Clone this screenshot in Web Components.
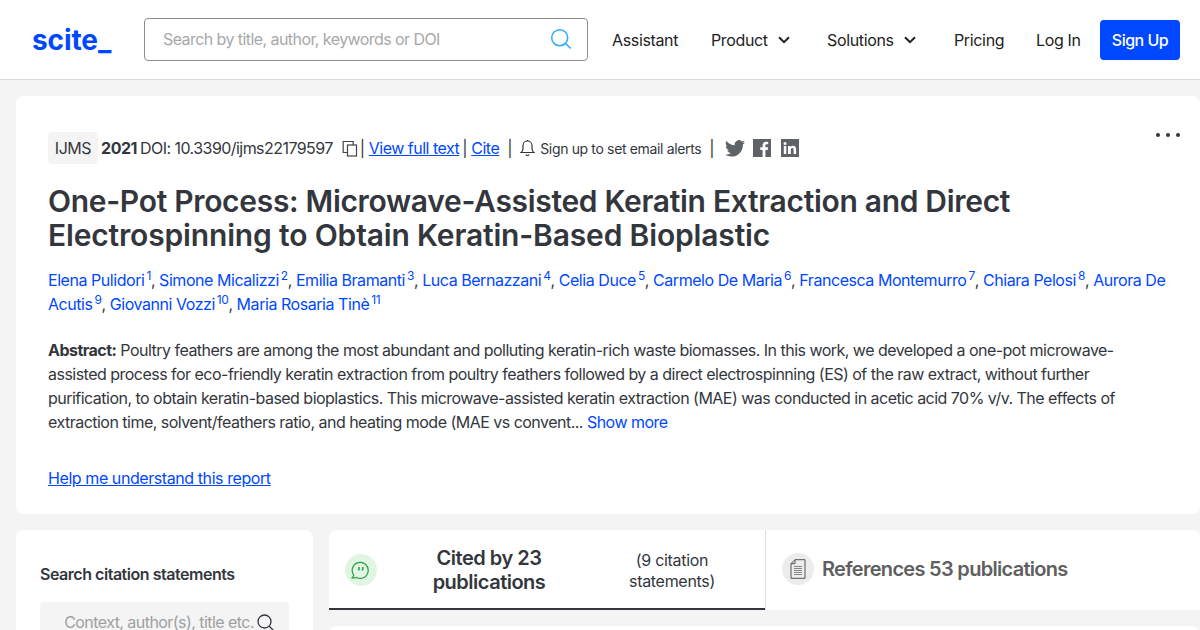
<!DOCTYPE html>
<html lang="en">
<head>
<meta charset="utf-8">
<title>scite</title>
<style>
html, body { margin: 0; height: 630px; overflow: hidden; background: #f4f4f4; }
body { font-family: Inter, "Liberation Sans", sans-serif; color: #33373d; }
.lower { display: flex; gap: 16px; box-sizing: border-box; height: 116px; overflow: hidden; padding: 16px 0 0 16px; }
.right { flex: 1; display: flex; flex-direction: column; gap: 16px; }
</style>
</head>
<body>
<site-header></site-header>
<report-card></report-card>
<div class="lower">
    <search-panel></search-panel>
    <div class="right">
        <cite-tabs></cite-tabs>
        <result-card></result-card>
    </div>
</div>
<script>
class SiteHeader extends HTMLElement {
    constructor() {
        super();
        this.attachShadow({ mode: 'open' });
        const chevron = `<svg width="12" height="8" viewBox="0 0 12 8" fill="none" stroke="#222" stroke-width="2"><path d="M1 1.2l5 5 5-5"/></svg>`;
        this.shadowRoot.innerHTML = `
        <style>
:host {
    display: flex;
    align-items: center;
    box-sizing: border-box;
    height: 80px;
    background: #fff;
    border-bottom: 1px solid #dcdcdc;
    padding: 0 20px 0 32px;
    font-size: 16px;
    letter-spacing: -0.35px;
    color: #222;
    white-space: nowrap;
}
.logo {
    flex: none;
    width: 112px;
    font-size: 28px;
    font-weight: 700;
    letter-spacing: -0.1px;
    color: #0048ff;
}
.search {
    display: flex;
    flex: none;
    align-items: center;
    justify-content: space-between;
    box-sizing: border-box;
    width: 444px;
    height: 43px;
    padding: 0 15px 2px 18px;
    border: 1px solid #8c8c8c;
    border-radius: 4px;
    color: #a8a8a8;
    letter-spacing: -0.57px;
}
nav {
    display: flex;
    align-items: center;
    margin-left: 24px;
}
.item { display: flex; align-items: center; gap: 10px; }
.signup {
    background: #0048ff;
    color: #fff;
    font-weight: 500;
    border-radius: 4px;
    box-sizing: border-box;
    width: 80px;
    text-align: center;
    height: 40px;
    line-height: 40px;
    letter-spacing: -0.5px;
}
        </style>
        <div class="logo">scite_</div>
        <div class="search">
            <span>Search by title, author, keywords or DOI</span>
            <svg width="22" height="22" viewBox="0 0 22 22" fill="none" stroke="#2aa9ff" stroke-width="1.5"><circle cx="9.7" cy="9.7" r="8"/><path d="M15.5 15.5l5.2 5"/></svg>
        </div>
        <nav>
            <span class="item" style="width:99px">Assistant</span>
            <span class="item" style="width:116px">Product ${chevron}</span>
            <span class="item" style="width:127px">Solutions ${chevron}</span>
            <span class="item" style="width:82px">Pricing</span>
            <span class="item" style="width:64px">Log In</span>
            <span class="signup">Sign Up</span>
        </nav>`;
    }
}

class ReportCard extends HTMLElement {
    constructor() {
        super();
        this.attachShadow({ mode: 'open' });
        const authors = [
            ['Elena Pulidori', 1], ['Simone Micalizzi', 2], ['Emilia Bramanti', 3], ['Luca Bernazzani', 4],
            ['Celia Duce', 5], ['Carmelo De Maria', 6], ['Francesca Montemurro', 7], ['Chiara Pelosi', 8],
            ['Aurora De Acutis', 9], ['Giovanni Vozzi', 10], ['Maria Rosaria Tinè', 11],
        ];
        this.shadowRoot.innerHTML = `
        <style>
:host {
    display: block;
    position: relative;
    box-sizing: border-box;
    height: 418px;
    margin: 16px 0 0 16px;
    padding: 36px 32px 0;
    background: #fff;
    border-radius: 8px;
    font-size: 16px;
    letter-spacing: -0.45px;
    color: #33373d;
}
a { color: #0048ff; }
.blue { color: #0048ff; text-decoration: none; }
.meta { display: flex; align-items: center; height: 32px; white-space: nowrap; }
.tag { flex: none; width: 50px; text-align: center; background: #f4f4f4; border-radius: 4px; height: 32px; line-height: 32px; margin-right: 3px; }
.meta svg { flex: none; }
.small { font-size: 14px; letter-spacing: -0.35px; }
h1 {
    margin: 20px 0 0;
    font-size: 30px;
    line-height: 34px;
    font-weight: 600;
    letter-spacing: -0.31px;
    color: #33373d;
}
h1 span { letter-spacing: -0.16px; }
.authors { margin-top: 16px; line-height: 24px; width: 1120px; }
sup { font-size: 12px; line-height: 0; margin-left: 2px; color: #0048ff; }
.abstract { margin-top: 22px; line-height: 24px; width: 1090px; letter-spacing: -0.52px; }
.help { display: block; margin-top: 32px; line-height: 24px; letter-spacing: -0.42px; }
.more { position: absolute; right: 20px; top: 37px; display: flex; gap: 6px; }
.more i { width: 4px; height: 4px; border-radius: 50%; background: #33373d; }
        </style>
        <div class="more"><i></i><i></i><i></i></div>
        <div class="meta">
            <span class="tag">IJMS</span>
            <b style="font-weight:700;margin-right:3px">2021</b>
            <span style="letter-spacing:-0.55px">DOI: 10.3390/ijms22179597</span>
            <svg style="margin:0 1px 0 9px" width="17" height="17" viewBox="0 0 17 17" fill="none" stroke="#444" stroke-width="1.2"><path d="M5 12.5H1.2V1.5h10V5"/><rect x="5.500" y="5" width="9" height="11"/></svg>
            <span>|&nbsp;</span>
            <a href="#" style="letter-spacing:-0.5px">View full text</a>
            <span style="margin:0 4px 0 3px">|</span>
            <a href="#">Cite</a>
            <span style="margin:0 8px">|</span>
            <svg width="15" height="18" viewBox="0 0 15 18" fill="none" stroke="#33373d" stroke-width="1.2"><path d="M1 13.500c1.500-1 2-2 2-4V6.500a4.500 4.500 0 0 1 9 0v3c0 2 .5 3 2 4z"/><path d="M6 15.500a1.600 1.600 0 0 0 3 0M7.500 1v1"/></svg>
            <span class="small" style="margin:0 8px 0 5px">Sign up to set email alerts</span>
            <span style="margin-right:11px">|</span>
            <svg width="20" height="17" viewBox="0 0 24 20" fill="#5f6368"><path d="M24 2.400a9.800 9.800 0 0 1-2.800.8A5 5 0 0 0 23.300.500a9.800 9.800 0 0 1-3.100 1.200 4.900 4.900 0 0 0-8.400 4.500A14 14 0 0 1 1.700 1a4.900 4.900 0 0 0 1.500 6.600 4.900 4.900 0 0 1-2.200-.6c0 2.400 1.700 4.500 4 5a4.900 4.900 0 0 1-2.200.1 4.900 4.900 0 0 0 4.600 3.400A9.900 9.900 0 0 1 0 17.500 14 14 0 0 0 7.500 19.700c9.100 0 14.300-7.700 14-14.600A10 10 0 0 0 24 2.400z"/></svg>
            <svg style="margin-left:8px" width="18" height="18" viewBox="0 0 18 18"><rect width="18" height="18" fill="#5f6368"/><path fill="#fff" d="M12.400 18v-7h2.300l.4-2.700h-2.700V6.600c0-.8.2-1.300 1.300-1.300h1.500V2.900c-.3 0-1.100-.1-2.100-.1-2.100 0-3.500 1.300-3.500 3.600v1.900H7.300V11h2.300v7z"/></svg>
            <svg style="margin-left:10px" width="18" height="18" viewBox="0 0 18 18"><rect width="18" height="18" fill="#5f6368"/><path fill="#fff" d="M2.800 7h2.500v8H2.800zM4 3a1.500 1.500 0 1 1 0 3 1.500 1.500 0 0 1 0-3zM7 7h2.400v1.100c.4-.7 1.300-1.300 2.600-1.300 2.600 0 3.100 1.700 3.100 3.900V15h-2.500v-3.800c0-1 0-2.200-1.300-2.200s-1.500 1-1.500 2.100V15H7z"/></svg>
        </div>
        <h1>One-Pot Process: Microwave-Assisted Keratin Extraction and Direct <span>Electrospinning to Obtain Keratin-Based Bioplastic</span></h1>
        <div class="authors">${authors.map(([name, n]) => `<a class="blue" href="#">${name}</a><sup>${n}</sup>`).join(', ')}</div>
        <div class="abstract"><b style="font-weight:700">Abstract:</b> Poultry feathers are among the most abundant and polluting keratin-rich waste biomasses. In this work, we developed a one-pot microwave-assisted process for eco-friendly keratin extraction from poultry feathers followed by a direct electrospinning (ES) of the raw extract, without further purification, to obtain keratin-based bioplastics. This microwave-assisted keratin extraction (MAE) was conducted in acetic acid 70% v/v. The effects of extraction time, solvent/feathers ratio, and heating mode (MAE vs convent... <a class="blue" href="#">Show more</a></div>
        <a class="help" href="#">Help me understand this report</a>`;
    }
}

class SearchPanel extends HTMLElement {
    constructor() {
        super();
        this.attachShadow({ mode: 'open' });
        this.shadowRoot.innerHTML = `
        <style>
:host {
    display: block;
    box-sizing: border-box;
    flex: none;
    width: 297px;
    height: 200px;
    padding: 34px 24px 0;
    background: #fff;
    border-radius: 8px;
}
.title { font-size: 16px; line-height: 20px; font-weight: 600; color: #33373d; letter-spacing: -0.47px; }
.input {
    display: flex;
    align-items: center;
    justify-content: flex-end;
    gap: 3px;
    box-sizing: border-box;
    height: 40px;
    margin-top: 18px;
    padding-right: 15px;
    background: #f4f4f4;
    border-radius: 4px;
    font-size: 16px;
    letter-spacing: -0.55px;
    color: #a0a0a0;
    white-space: nowrap;
}
        </style>
        <div class="title">Search citation statements</div>
        <div class="input">
            <span>Context, author(s), title etc.</span>
            <svg width="17" height="17" viewBox="0 0 17 17" fill="none" stroke="#33373d" stroke-width="1.3"><circle cx="7.500" cy="7.500" r="6.500"/><path d="M12 12l4.500 4.500"/></svg>
        </div>`;
    }
}

class CiteTabs extends HTMLElement {
    constructor() {
        super();
        this.attachShadow({ mode: 'open' });
        this.shadowRoot.innerHTML = `
        <style>
:host {
    display: flex;
    flex: none;
    box-sizing: border-box;
    height: 80px;
    background: #fff;
    border-radius: 8px 8px 0 0;
    letter-spacing: -0.3px;
}
.tab { display: flex; align-items: center; box-sizing: border-box; height: 80px; }
.cited { width: 436px; padding: 2px 0 0 16px; border-bottom: 2px solid #33373d; }
.refs { flex: 1; padding: 0 0 2px 16px; border-left: 1px solid #ddd; gap: 8px; }
.round { flex: none; display: flex; align-items: center; justify-content: center; width: 32px; height: 32px; border-radius: 50%; }
.big { font-size: 20px; line-height: 24px; font-weight: 600; text-align: center; color: #33373d; letter-spacing: -0.5px; }
.sub { font-size: 16px; line-height: 21px; text-align: center; color: #33373d; }
        </style>
        <div class="tab cited">
            <span class="round" style="background:#e1f5e3">
                <svg width="20" height="20" viewBox="0 0 20 20" fill="none" stroke="#2c9c45" stroke-width="1.200"><path d="M2.800 15.200A8 8 0 1 1 5.500 17.500c-1.200.5-2.700.6-4.300.3.800-.7 1.300-1.500 1.600-2.600z"/><path stroke-width="1.500" d="M8 7v2.200l-.6 1.200M11.800 7v2.200l-.6 1.200"/></svg>
            </span>
            <span class="big" style="width:160px;margin-left:32px">Cited by 23 publications</span>
            <span class="sub" style="width:110px;margin-left:48px;padding-top:1px">(9 citation statements)</span>
        </div>
        <div class="tab refs">
            <span class="round" style="background:#ececec">
                <svg width="16" height="20" viewBox="0 0 16 20" fill="none" stroke="#555" stroke-width="1"><path d="M5 .7h10v18.600H1V4.700zM5 .7v4H1"/><path stroke="#888" d="M4 7.500h8M4 9.500h8M4 11.500h8M4 13.500h8M4 15.500h8"/></svg>
            </span>
            <span class="big" style="color:#5f5f5f;letter-spacing:-0.7px">References 53 publications</span>
        </div>`;
    }
}

class ResultCard extends HTMLElement {
    constructor() {
        super();
        this.attachShadow({ mode: 'open' });
        this.shadowRoot.innerHTML = `
        <style>
:host { display: block; flex: none; height: 200px; background: #fff; border-radius: 8px; }
        </style>
        <slot></slot>`;
    }
}

customElements.define('site-header', SiteHeader);
customElements.define('report-card', ReportCard);
customElements.define('search-panel', SearchPanel);
customElements.define('cite-tabs', CiteTabs);
customElements.define('result-card', ResultCard);
</script>
</body>
</html>
